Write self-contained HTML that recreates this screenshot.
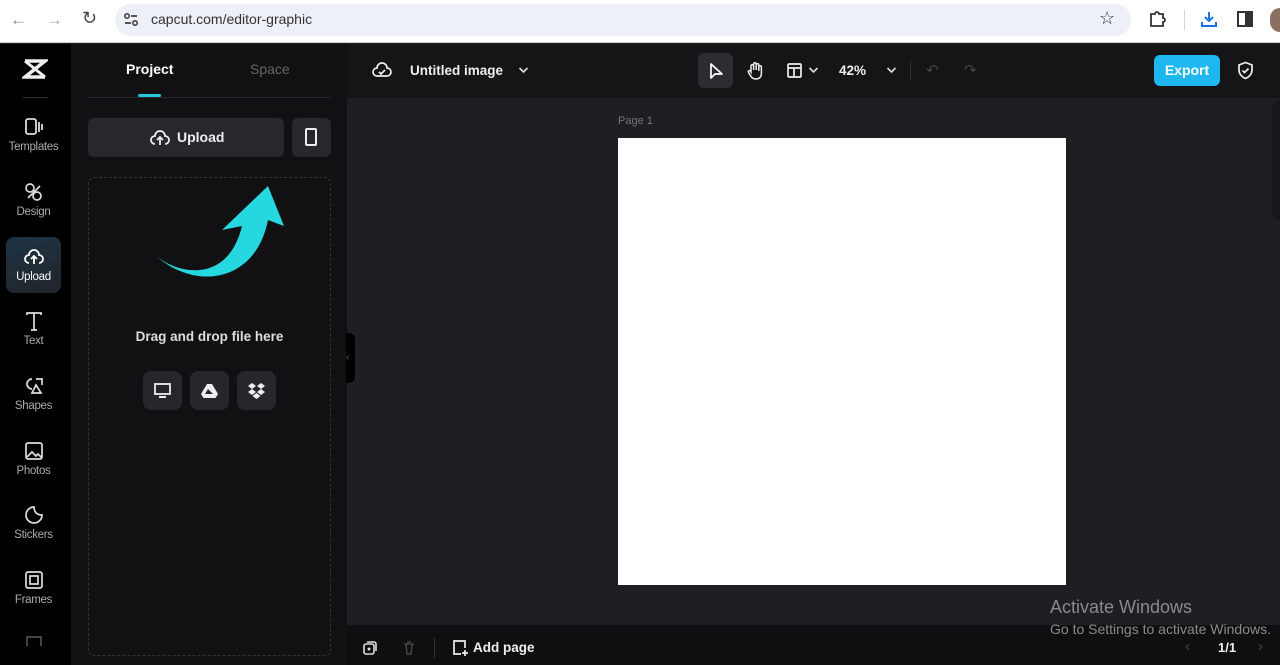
<!DOCTYPE html>
<html><head><style>
*{margin:0;padding:0;box-sizing:border-box}
body{width:1280px;height:665px;overflow:hidden;background:#1e1f22;font-family:"Liberation Sans",sans-serif;position:relative}
.abs{position:absolute}
.nav{color:#aaa;font-size:11.5px;text-align:center;width:67px;left:0;letter-spacing:-0.3px}
.side svg{display:block;margin:0 auto 3px}
.chev{color:#ccc;font-size:14px}
</style></head><body>
<div class="abs" style="left:0;top:0;width:1280px;height:43px;background:#fff;border-bottom:1px solid #ccc"></div>
<div class="abs" style="left:10px;top:10px;color:#888;font-size:17px">←</div>
<div class="abs" style="left:46px;top:10px;color:#aaa;font-size:17px">→</div>
<div class="abs" style="left:82px;top:8px;color:#444;font-size:18px">↻</div>
<div class="abs" style="left:115px;top:4px;width:1016px;height:32px;border-radius:16px;background:#edf0f7"></div>
<svg class="abs" style="left:123px;top:12px" width="16" height="16" viewBox="0 0 16 16"><circle cx="4" cy="4" r="2.2" fill="none" stroke="#444" stroke-width="1.6"/><line x1="8" y1="4" x2="14" y2="4" stroke="#444" stroke-width="1.8"/><line x1="2" y1="11" x2="8" y2="11" stroke="#444" stroke-width="1.8"/><circle cx="12" cy="11" r="2.2" fill="none" stroke="#444" stroke-width="1.6"/></svg>
<div class="abs" style="left:151px;top:11px;font-size:14px;color:#333">capcut.com/editor-graphic</div>
<div class="abs" style="left:1099px;top:8px;font-size:18px;color:#333">☆</div>
<svg class="abs" style="left:1148px;top:10px" width="18" height="18" viewBox="0 0 18 18"><path d="M3 4h4a2 2 0 0 1 4 0h4v4a2 2 0 0 1 0 4v4H3z" fill="none" stroke="#333" stroke-width="1.8"/></svg>
<div class="abs" style="left:1184px;top:10px;width:1px;height:20px;background:#cfd8e6"></div>
<svg class="abs" style="left:1200px;top:10px" width="18" height="18" viewBox="0 0 18 18"><path d="M9 2v9M5 7l4 4 4-4M2 12v4h14v-4" fill="none" stroke="#1a73e8" stroke-width="2"/></svg>
<svg class="abs" style="left:1237px;top:11px" width="16" height="16" viewBox="0 0 16 16"><rect x="1" y="1" width="14" height="14" fill="none" stroke="#333" stroke-width="2"/><rect x="8" y="1" width="7" height="14" fill="#333"/></svg>
<div class="abs" style="left:1270px;top:8px;width:20px;height:24px;border-radius:10px;background:#8a7060"></div>

<div class="abs side" style="left:0;top:44px;width:71px;height:621px;background:#000">
  <svg class="abs" style="left:22px;top:14px" width="26" height="22" viewBox="0 0 26 22"><path d="M3 3h20L3 19h20" fill="none" stroke="#eee" stroke-width="3.5"/><path d="M3 3l20 16M23 3L3 19" stroke="#eee" stroke-width="3"/></svg>
  <div class="abs" style="left:23px;top:53px;width:25px;height:1px;background:#333"></div>
  <div class="abs" style="left:6px;top:193px;width:55px;height:56px;border-radius:8px;background:linear-gradient(160deg,#1f3345,#202529)"></div>
  <div class="abs nav" style="top:72px"><svg width="22" height="22" viewBox="0 0 22 22"><rect x="3" y="3" width="10" height="15" rx="2" fill="none" stroke="#ddd" stroke-width="1.8"/><path d="M16 6v10M19 8v6" stroke="#ddd" stroke-width="1.8"/></svg>Templates</div>
  <div class="abs nav" style="top:137px"><svg width="22" height="22" viewBox="0 0 22 22"><circle cx="7" cy="7" r="4" fill="none" stroke="#ddd" stroke-width="1.7"/><circle cx="14" cy="15" r="4" fill="none" stroke="#ddd" stroke-width="1.7"/><path d="M5 17L17 5" stroke="#ddd" stroke-width="1.7"/></svg>Design</div>
  <div class="abs nav" style="top:202px;color:#fff"><svg width="22" height="22" viewBox="0 0 22 22"><path d="M6 17a4 4 0 0 1 0-8 5 5 0 0 1 10 0 4 4 0 0 1 0 8M11 18v-7M8 13l3-3 3 3" fill="none" stroke="#fff" stroke-width="1.8"/></svg>Upload</div>
  <div class="abs nav" style="top:266px"><svg width="22" height="22" viewBox="0 0 22 22"><path d="M4 5V3h14v2M11 3v17M8 20h6" fill="none" stroke="#ddd" stroke-width="1.7"/></svg>Text</div>
  <div class="abs nav" style="top:331px"><svg width="22" height="22" viewBox="0 0 22 22"><path d="M9 4a5 5 0 1 0 0 10" fill="none" stroke="#ddd" stroke-width="1.7"/><path d="M13 4l6 0v6M13 10l-4 8h9z" fill="none" stroke="#ddd" stroke-width="1.7"/></svg>Shapes</div>
  <div class="abs nav" style="top:396px"><svg width="22" height="22" viewBox="0 0 22 22"><rect x="3" y="3" width="16" height="16" rx="2" fill="none" stroke="#ddd" stroke-width="1.7"/><path d="M4 17l5-5 4 4 2-2 4 4" fill="none" stroke="#ddd" stroke-width="1.7"/></svg>Photos</div>
  <div class="abs nav" style="top:460px"><svg width="22" height="22" viewBox="0 0 22 22"><path d="M19 11A8 8 0 1 1 11 3c0 5 3 8 8 8z" fill="none" stroke="#ddd" stroke-width="1.7"/></svg>Stickers</div>
  <div class="abs nav" style="top:525px"><svg width="22" height="22" viewBox="0 0 22 22"><rect x="3" y="3" width="16" height="16" rx="2" fill="none" stroke="#ddd" stroke-width="1.7"/><rect x="7" y="7" width="8" height="8" fill="none" stroke="#ddd" stroke-width="1.7"/></svg>Frames</div>
  <div class="abs" style="left:26px;top:592px;width:16px;height:10px;border:2px solid #444;border-bottom:none"></div>
</div>

<div class="abs" style="left:71px;top:44px;width:276px;height:621px;background:#111113"></div>
<div class="abs" style="left:126px;top:61px;color:#fff;font-weight:bold;font-size:14px">Project</div>
<div class="abs" style="left:250px;top:61px;color:#666;font-size:14px">Space</div>
<div class="abs" style="left:138px;top:94px;width:23px;height:3px;background:#22c8d8;border-radius:2px"></div>
<div class="abs" style="left:88px;top:97px;width:243px;height:1px;background:#2a2a2e"></div>
<div class="abs" style="left:88px;top:118px;width:196px;height:39px;border-radius:6px;background:#27282c;color:#eee;font-weight:bold;font-size:14px;line-height:39px;padding-left:89px">Upload</div>
<svg class="abs" style="left:150px;top:129px" width="20" height="18" viewBox="0 0 20 18"><path d="M5 15a4 4 0 0 1 0-8 5 5 0 0 1 10 0 4 4 0 0 1 0 8M10 16v-7M7 11l3-3 3 3" fill="none" stroke="#eee" stroke-width="1.8"/></svg>
<div class="abs" style="left:292px;top:118px;width:39px;height:39px;border-radius:6px;background:#27282c"></div>
<div class="abs" style="left:305px;top:128px;width:12px;height:18px;border:2px solid #eee;border-radius:2px"></div>
<div class="abs" style="left:88px;top:177px;width:243px;height:479px;border:1px dashed #333;border-radius:6px"></div>
<svg class="abs" style="left:150px;top:182px" width="140" height="105" viewBox="150 182 140 105"><path d="M155 255C178 275 228 284 242 226L222 230 268 186 284 226 268 220C256 282 196 292 155 255z" fill="#25d7de"/></svg>
<div class="abs" style="left:88px;top:329px;width:243px;text-align:center;color:#ddd;font-size:13.5px;font-weight:bold">Drag and drop file here</div>
<div class="abs" style="left:143px;top:371px;width:39px;height:39px;border-radius:8px;background:#26272b"></div>
<div class="abs" style="left:190px;top:371px;width:39px;height:39px;border-radius:8px;background:#26272b"></div>
<div class="abs" style="left:237px;top:371px;width:39px;height:39px;border-radius:8px;background:#26272b"></div>
<svg class="abs" style="left:153px;top:381px" width="19" height="19" viewBox="0 0 19 19"><rect x="2" y="3" width="15" height="10" fill="none" stroke="#eee" stroke-width="1.8"/><path d="M6 16h7" stroke="#eee" stroke-width="2"/></svg>
<svg class="abs" style="left:200px;top:381px" width="19" height="19" viewBox="0 0 19 19"><path d="M7 3h5l6 10-2.5 4h-12L1 13z" fill="#eee"/><path d="M8 8l-3 5h8z" fill="#26272b"/></svg>
<svg class="abs" style="left:247px;top:381px" width="19" height="19" viewBox="0 0 19 19"><path d="M5 2l4 3-4 3-4-3zM14 2l4 3-4 3-4-3zM5 8l4 3-4 3-4-3zM14 8l4 3-4 3-4-3zM9.5 12l4 3-4 3-4-3z" fill="#eee"/></svg>
<div class="abs" style="left:346px;top:333px;width:9px;height:50px;background:#000;border-radius:0 6px 6px 0;color:#666;font-size:10px;line-height:50px">‹</div>

<div class="abs" style="left:347px;top:44px;width:933px;height:54px;background:#151517"></div>
<svg class="abs" style="left:372px;top:61px" width="20" height="18" viewBox="0 0 20 18"><path d="M5 15a4 4 0 0 1 0-8 5 5 0 0 1 10 0 4 4 0 0 1 0 8z M7 11l2 2 4-4" fill="none" stroke="#eee" stroke-width="1.7"/></svg>
<div class="abs" style="left:410px;top:63px;color:#eee;font-weight:bold;font-size:13.5px">Untitled image</div>
<svg class="abs" style="left:518px;top:66px" width="11" height="8" viewBox="0 0 11 8"><path d="M1.5 2l4 4 4-4" fill="none" stroke="#ddd" stroke-width="1.6"/></svg>
<div class="abs" style="left:698px;top:53px;width:35px;height:35px;border-radius:6px;background:#2c2d31"></div>
<svg class="abs" style="left:707px;top:62px" width="18" height="18" viewBox="0 0 18 18"><path d="M4 2v14l4-4 7 0z" fill="none" stroke="#fff" stroke-width="1.7" stroke-linejoin="round"/></svg>
<svg class="abs" style="left:746px;top:61px" width="18" height="20" viewBox="0 0 18 20"><path d="M5 11V5a1.3 1.3 0 0 1 2.6 0V9V3a1.3 1.3 0 0 1 2.6 0v6V4a1.3 1.3 0 0 1 2.6 0v6V6a1.3 1.3 0 0 1 2.6 0v6c0 4-2 6-6 6-3 0-4-2-6-5l-1-2c-.5-1 1-2 2-1z" fill="none" stroke="#eee" stroke-width="1.5"/></svg>
<svg class="abs" style="left:786px;top:62px" width="17" height="17" viewBox="0 0 17 17"><rect x="2" y="2" width="13" height="13" rx="1" fill="none" stroke="#eee" stroke-width="1.7"/><path d="M2 6h13M8 6v9" stroke="#eee" stroke-width="1.7"/></svg>
<svg class="abs" style="left:808px;top:66px" width="11" height="8" viewBox="0 0 11 8"><path d="M1.5 2l4 4 4-4" fill="none" stroke="#ddd" stroke-width="1.6"/></svg>
<div class="abs" style="left:839px;top:63px;color:#eee;font-weight:bold;font-size:13.5px">42%</div>
<svg class="abs" style="left:886px;top:66px" width="11" height="8" viewBox="0 0 11 8"><path d="M1.5 2l4 4 4-4" fill="none" stroke="#ddd" stroke-width="1.6"/></svg>
<div class="abs" style="left:910px;top:61px;width:1px;height:18px;background:#333"></div>
<div class="abs" style="left:926px;top:61px;color:#444;font-size:15px">↶</div>
<div class="abs" style="left:964px;top:61px;color:#444;font-size:15px">↷</div>
<div class="abs" style="left:1154px;top:55px;width:66px;height:31px;border-radius:6px;background:#1eb7ef;color:#fff;font-weight:bold;font-size:14px;text-align:center;line-height:31px">Export</div>
<svg class="abs" style="left:1237px;top:61px" width="17" height="19" viewBox="0 0 17 19"><path d="M8.5 1.5L15 4v5c0 4-3 7-6.5 8.5C5 16 2 13 2 9V4z M5.5 9.5l2 2 4-4" fill="none" stroke="#eee" stroke-width="1.7"/></svg>

<div class="abs" style="left:618px;top:115px;color:#777;font-size:11px">Page 1</div>
<div class="abs" style="left:618px;top:138px;width:448px;height:447px;background:#fff"></div>
<div class="abs" style="left:1272px;top:100px;width:8px;height:120px;border-radius:8px 0 0 8px;background:#17181a"></div>

<div class="abs" style="left:347px;top:625px;width:933px;height:40px;background:#0f0f11"></div>
<svg class="abs" style="left:362px;top:640px" width="16" height="16" viewBox="0 0 16 16"><rect x="2" y="4" width="10" height="10" rx="2" fill="none" stroke="#ddd" stroke-width="1.6"/><path d="M5 2h7a2 2 0 0 1 2 2v7" fill="none" stroke="#ddd" stroke-width="1.6"/><circle cx="7" cy="9" r="1.5" fill="#ddd"/></svg>
<svg class="abs" style="left:402px;top:640px" width="14" height="16" viewBox="0 0 14 16"><path d="M2 4h10M4 4l1 10h4l1-10M5 2h4" fill="none" stroke="#444" stroke-width="1.5"/></svg>
<div class="abs" style="left:434px;top:638px;width:1px;height:20px;background:#333"></div>
<svg class="abs" style="left:451px;top:639px" width="18" height="18" viewBox="0 0 18 18"><path d="M10 15H3V2h11v7" fill="none" stroke="#eee" stroke-width="1.7"/><path d="M14 11v6M11 14h6" stroke="#eee" stroke-width="1.7"/></svg>
<div class="abs" style="left:473px;top:640px;color:#eee;font-weight:bold;font-size:13.5px">Add page</div>
<div class="abs" style="left:1050px;top:597px;color:#8a8a8a;font-size:18px">Activate Windows</div>
<div class="abs" style="left:1050px;top:621px;color:#8a8a8a;font-size:14px;white-space:nowrap">Go to Settings to activate Windows.</div>
<div class="abs" style="left:1185px;top:638px;color:#444;font-size:15px">‹</div>
<div class="abs" style="left:1218px;top:640px;color:#eee;font-weight:bold;font-size:13px">1/1</div>
<div class="abs" style="left:1258px;top:638px;color:#444;font-size:15px">›</div>
</body></html>
